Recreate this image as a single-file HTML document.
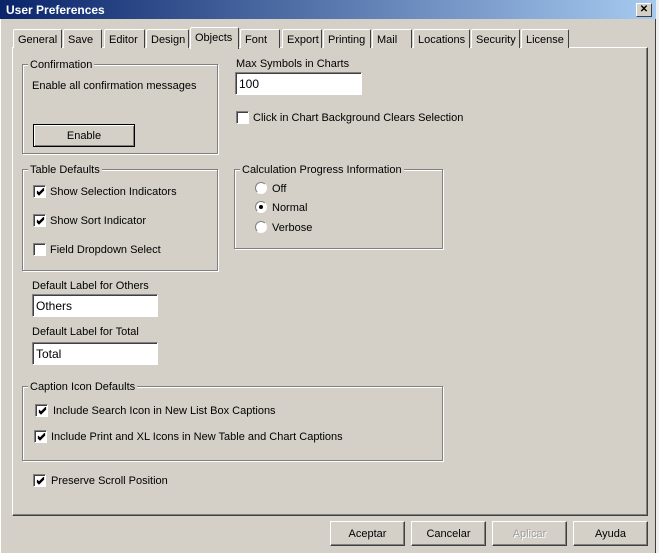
<!DOCTYPE html>
<html><head><style>
*{box-sizing:border-box;margin:0;padding:0}
body{width:659px;height:553px;background:#f0f0f0;position:relative;overflow:hidden;font-family:"Liberation Sans",Arial,sans-serif;font-size:11px;color:#000}
.a{position:absolute}
#dlg{left:0;top:0;width:656px;height:553px;background:#d4d0c8;border-right:1px solid #404040;border-left:1px solid #fff}
#title{left:0;top:0;width:656px;height:19px;background:linear-gradient(90deg,#0a246a,#a6caf0);color:#fff;font-weight:bold;font-size:12px;padding:3px 6px}
#close{left:636px;top:3px;width:16px;height:14px;background:#d4d0c8;border:1px solid;border-color:#fff #404040 #404040 #fff;font-size:10px;line-height:11px;text-align:center;font-weight:bold}
.tab{top:29px;height:19px;border:1px solid;border-color:#fff #404040 transparent #fff;border-bottom:none;border-radius:2px 2px 0 0;padding:4px 0 0 4px;background:#d4d0c8;white-space:nowrap;font-size:11px}
#panel{left:12px;top:47px;width:636px;height:469px;border:1px solid;border-color:#fff #404040 #404040 #fff;box-shadow:inset -1px -1px 0 #808080}
.grp{border:1px solid #808080;box-shadow:1px 1px 0 #fff,inset 1px 1px 0 #fff}
.lg{background:#d4d0c8;padding:0 2px;white-space:nowrap}
.cb{width:13px;height:13px;background:#fff;border:1px solid;border-color:#808080 #fff #fff #808080;box-shadow:inset 1px 1px 0 #404040}
.cb svg{position:absolute;left:2px;top:2px}
.rb{width:12px;height:12px;border-radius:50%;background:#fff;border:1px solid;border-color:#808080 #fff #fff #808080}
.rb.on::after{content:"";position:absolute;left:3px;top:3px;width:4px;height:4px;border-radius:50%;background:#000}
.t{white-space:nowrap;margin-top:1px}
.inp{background:#fff;border:1px solid;border-color:#808080 #fff #fff #808080;box-shadow:inset 1px 1px 0 #404040;padding:4px 3px 0;font-size:12px}
.btn{border:1px solid;border-color:#fff #404040 #404040 #fff;box-shadow:inset -1px -1px 0 #808080;text-align:center;padding-top:6px;background:#d4d0c8}
</style></head><body>
<div id="dlg" class="a"></div>
<div id="title" class="a">User Preferences</div>
<div id="close" class="a">✕</div>
<div id="panel" class="a"></div>
<div class="a tab" style="left:13px;width:49px">General</div>
<div class="a tab" style="left:63px;width:39px">Save</div>
<div class="a tab" style="left:104px;width:41px">Editor</div>
<div class="a tab" style="left:146px;width:43px">Design</div>
<div class="a tab" style="left:240px;width:40px">Font</div>
<div class="a tab" style="left:282px;width:40px">Export</div>
<div class="a tab" style="left:323px;width:48px">Printing</div>
<div class="a tab" style="left:372px;width:40px">Mail</div>
<div class="a tab" style="left:413px;width:57px">Locations</div>
<div class="a tab" style="left:471px;width:49px">Security</div>
<div class="a tab" style="left:521px;width:48px">License</div>
<div class="a tab" style="left:190px;top:27px;width:49px;height:22px;z-index:2;padding-top:4px">Objects</div>

<div class="a grp" style="left:22px;top:64px;width:196px;height:90px"></div>
<div class="a lg" style="left:28px;top:59px">Confirmation</div>
<div class="a t" style="left:32px;top:79px">Enable all confirmation messages</div>
<div class="a btn" style="left:33px;top:124px;width:102px;height:23px;border:1px solid #000;box-shadow:inset 1px 1px 0 #fff,inset -1px -1px 0 #808080;padding-top:5px">Enable</div>

<div class="a t" style="left:236px;top:57px">Max Symbols in Charts</div>
<div class="a inp" style="left:235px;top:72px;width:127px;height:23px">100</div>
<div class="a cb" style="left:236px;top:111px"></div>
<div class="a t" style="left:253px;top:111px">Click in Chart Background Clears Selection</div>

<div class="a grp" style="left:22px;top:169px;width:196px;height:102px"></div>
<div class="a lg" style="left:28px;top:164px">Table Defaults</div>
<div class="a cb" style="left:33px;top:185px"><svg width="9" height="9"><path d="M1 4l2 2 5-5M1 5l2 2 5-5M1 3l2 2 5-5" stroke="#000" fill="none"/></svg></div>
<div class="a t" style="left:50px;top:185px">Show Selection Indicators</div>
<div class="a cb" style="left:33px;top:214px"><svg width="9" height="9"><path d="M1 4l2 2 5-5M1 5l2 2 5-5M1 3l2 2 5-5" stroke="#000" fill="none"/></svg></div>
<div class="a t" style="left:50px;top:214px">Show Sort Indicator</div>
<div class="a cb" style="left:33px;top:243px"></div>
<div class="a t" style="left:50px;top:243px">Field Dropdown Select</div>

<div class="a grp" style="left:234px;top:169px;width:209px;height:80px"></div>
<div class="a lg" style="left:240px;top:164px">Calculation Progress Information</div>
<div class="a rb" style="left:255px;top:182px"></div><div class="a t" style="left:272px;top:182px">Off</div>
<div class="a rb on" style="left:255px;top:201px"></div><div class="a t" style="left:272px;top:201px">Normal</div>
<div class="a rb" style="left:255px;top:221px"></div><div class="a t" style="left:272px;top:221px">Verbose</div>

<div class="a t" style="left:32px;top:279px">Default Label for Others</div>
<div class="a inp" style="left:32px;top:294px;width:126px;height:23px">Others</div>
<div class="a t" style="left:32px;top:325px">Default Label for Total</div>
<div class="a inp" style="left:32px;top:342px;width:126px;height:23px">Total</div>

<div class="a grp" style="left:22px;top:386px;width:421px;height:75px"></div>
<div class="a lg" style="left:28px;top:381px">Caption Icon Defaults</div>
<div class="a cb" style="left:35px;top:404px"><svg width="9" height="9"><path d="M1 4l2 2 5-5M1 5l2 2 5-5M1 3l2 2 5-5" stroke="#000" fill="none"/></svg></div>
<div class="a t" style="left:53px;top:404px">Include Search Icon in New List Box Captions</div>
<div class="a cb" style="left:34px;top:430px"><svg width="9" height="9"><path d="M1 4l2 2 5-5M1 5l2 2 5-5M1 3l2 2 5-5" stroke="#000" fill="none"/></svg></div>
<div class="a t" style="left:51px;top:430px">Include Print and XL Icons in New Table and Chart Captions</div>
<div class="a cb" style="left:33px;top:474px"><svg width="9" height="9"><path d="M1 4l2 2 5-5M1 5l2 2 5-5M1 3l2 2 5-5" stroke="#000" fill="none"/></svg></div>
<div class="a t" style="left:51px;top:474px">Preserve Scroll Position</div>

<div class="a btn" style="left:330px;top:521px;width:75px;height:25px">Aceptar</div>
<div class="a btn" style="left:411px;top:521px;width:75px;height:25px">Cancelar</div>
<div class="a btn" style="left:492px;top:521px;width:75px;height:25px;color:#a0a0a0;text-shadow:1px 1px 0 #fff">Aplicar</div>
<div class="a btn" style="left:573px;top:521px;width:75px;height:25px">Ayuda</div>
</body></html>
